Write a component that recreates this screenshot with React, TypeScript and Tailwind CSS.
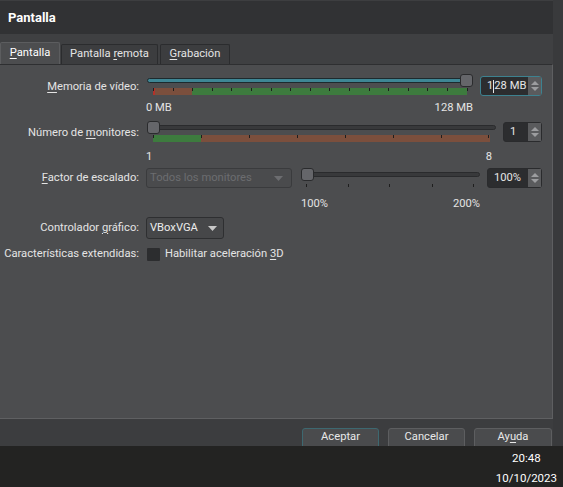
import React from "react"

const font = { fontFamily: "Roboto, 'Liberation Sans', sans-serif" }

function U({ children }: { children: React.ReactNode }) {
  return <span className="underline underline-offset-2">{children}</span>
}

function Arrows() {
  return (
    <div className="flex h-full w-[13px] flex-col items-center justify-center gap-[2px] bg-[#5a5b5d]">
      <svg width="8" height="4" viewBox="0 0 8 4">
        <path d="M0 4 L4 0 L8 4 Z" fill="#9c9d9f" />
      </svg>
      <svg width="8" height="4" viewBox="0 0 8 4">
        <path d="M0 0 L8 0 L4 4 Z" fill="#9c9d9f" />
      </svg>
    </div>
  )
}

function SpinBox({ className, focused, children }: { className: string; focused?: boolean; children: React.ReactNode }) {
  return (
    <div
      className={
        "flex h-[20px] items-stretch rounded-[3px] border bg-[#2c2d2f] " +
        (focused ? "border-[#3d8290] " : "border-[#2a2b2d] ") +
        className
      }
    >
      <div className="flex flex-1 items-center pl-[6px] text-[#e6e6e6]">{children}</div>
      <Arrows />
    </div>
  )
}

function Ticks({ positions }: { positions: number[] }) {
  return (
    <>
      {positions.map((p) => (
        <span key={p} className="absolute top-0 h-[3px] w-[1px] bg-[#1e1e1e]" style={{ left: p }} />
      ))}
    </>
  )
}

function Handle({ left, className }: { left: number; className?: string }) {
  return (
    <div
      className={
        "absolute top-0 h-[13px] w-[13px] rounded-[3px] border border-[#2a2b2d] bg-[#65666a] " + (className ?? "")
      }
      style={{ left }}
    />
  )
}

function Label({ children, h }: { children: React.ReactNode; h: string }) {
  return <div className={"flex w-[139px] shrink-0 items-center justify-end " + h}>{children}</div>
}

export default function App() {
  const memTicks = Array.from({ length: 17 }, (_, i) => Math.round(i * 19.6))
  const monTicks = Array.from({ length: 8 }, (_, i) => i * 48)

  return (
    <div
      className="flex h-[487px] w-[563px] flex-col overflow-hidden whitespace-nowrap bg-[#3b3c3e] text-[11.2px] text-[#e4e4e4]"
      style={font}
    >
      <div className="flex flex-1">
        {/* Main dialog column */}
        <div className="flex w-[553px] flex-col bg-[#3f4042]">
          <div className="flex h-[34px] items-center border-t border-[#3d3e40] bg-[#313234] pl-[8px] text-[13px] font-bold text-white">
            Pantalla
          </div>

          {/* Tabs */}
          <div className="mt-[8px] flex h-[22px] items-end">
            <div className="flex h-[22px] w-[60px] items-center justify-center rounded-t-[2px] border-x border-t border-[#5c5d5f] bg-[#4c4d4f] text-white">
              <span><U>P</U>antalla</span>
            </div>
            <div className="ml-[1px] flex h-[20px] w-[97px] items-center justify-center rounded-t-[2px] border-x border-t border-[#2b2c2e] bg-[#3c3d3f]">
              <span>Pantalla <U>r</U>emota</span>
            </div>
            <div className="ml-[2px] flex h-[20px] w-[70px] items-center justify-center rounded-t-[2px] border-x border-t border-[#2b2c2e] bg-[#3c3d3f]">
              <span><U>G</U>rabación</span>
            </div>
          </div>

          {/* Panel */}
          <div className="flex flex-1 flex-col border-r border-t border-b border-r-[#5e5f61] border-t-[#2e2f31] border-b-[#5f6062] bg-[#4c4d4f] pt-[9px]">
            {/* Row 1: video memory */}
            <div className="flex items-start">
              <Label h="h-[26px]">
                <span><U>M</U>emoria de vídeo:</span>
              </Label>
              <div className="ml-[7px] w-[330px]">
                <div className="relative h-[13px]">
                  <div className="absolute left-[1px] right-[3px] top-[4px] h-[5px] rounded-full border border-[#1d2a2e] bg-[#3e8694]" />
                  <Handle left={314} />
                </div>
                <div className="relative ml-[7px] mt-[1px] flex h-[7px] w-[314px]">
                  <div className="w-[2px] bg-[#b3322a]" />
                  <div className="w-[37px] bg-[#7b4f3d]" />
                  <div className="flex-1 bg-[#3d7b3e]" />
                  <Ticks positions={memTicks} />
                </div>
                <div className="mt-[6px] flex w-[327px] justify-between leading-[14px]">
                  <span>0 MB</span>
                  <span>128 MB</span>
                </div>
              </div>
              <SpinBox className="ml-[4px] mt-[2px] w-[62px]" focused>
                <span>1</span>
                <span className="inline-block h-[13px] w-[1px] bg-[#e6e6e6]" />
                <span>28 MB</span>
              </SpinBox>
            </div>

            {/* Row 2: monitors */}
            <div className="mt-[6px] flex items-start">
              <Label h="h-[24px]">
                <span>Número de <U>m</U>onitores:</span>
              </Label>
              <div className="ml-[7px] w-[350px]">
                <div className="relative h-[13px]">
                  <div className="absolute left-[1px] right-0 top-[4px] h-[5px] rounded-full border border-[#2a2b2d] bg-[#38393b]" />
                  <Handle left={1} />
                </div>
                <div className="relative ml-[7px] mt-[1px] flex h-[7px] w-[337px]">
                  <div className="w-[48px] bg-[#3d7b3e]" />
                  <div className="flex-1 bg-[#7b4f3d]" />
                  <Ticks positions={monTicks.map((t) => (t === 336 ? 335 : t))} />
                </div>
                <div className="mt-[8px] flex justify-between pr-[4px] leading-[14px]">
                  <span>1</span>
                  <span>8</span>
                </div>
              </div>
              <SpinBox className="ml-[7px] mt-[1px] w-[39px]">
                <span>1</span>
              </SpinBox>
            </div>

            {/* Row 3: scaling */}
            <div className="mt-[4px] flex items-start">
              <Label h="h-[20px]">
                <span><U>F</U>actor de escalado:</span>
              </Label>
              <div className="ml-[7px] flex h-[20px] w-[146px] items-center justify-between rounded-[3px] border border-[#3a3b3d] bg-[#4a4b4d] pl-[3px] pr-[8px] text-[#6c6d70]">
                <span>Todos los monitores</span>
                <svg width="9" height="5" viewBox="0 0 9 5">
                  <path d="M0 0 L9 0 L4.5 5 Z" fill="#6c6d70" />
                </svg>
              </div>
              <div className="ml-[9px] w-[179px]">
                <div className="relative h-[13px]">
                  <div className="absolute left-0 right-0 top-[4px] h-[5px] rounded-full border border-[#2a2b2d] bg-[#38393b]" />
                  <Handle left={0} className="w-[12px]" />
                </div>
                <div className="relative mt-[3px] h-[3px]">
                  <Ticks positions={[5, 47, 88, 131, 172]} />
                </div>
                <div className="mt-[10px] flex justify-between leading-[14px]">
                  <span>100%</span>
                  <span>200%</span>
                </div>
              </div>
              <SpinBox className="ml-[7px] w-[55px]">
                <span>100%</span>
              </SpinBox>
            </div>

            {/* Row 4: graphics controller */}
            <div className="mt-[6px] flex items-center">
              <Label h="h-[22px]">
                <span>Controlador <U>g</U>ráfico:</span>
              </Label>
              <div className="ml-[7px] flex h-[22px] w-[78px] items-center justify-between rounded-[3px] border border-[#2e2f31] bg-[#464749] pl-[3px] pr-[6px] text-[#ececec]">
                <span>VBoxVGA</span>
                <svg width="9" height="5" viewBox="0 0 9 5">
                  <path d="M0 0 L9 0 L4.5 5 Z" fill="#c8c8c8" />
                </svg>
              </div>
            </div>

            {/* Row 5: extended features */}
            <div className="mt-[7px] flex items-center">
              <Label h="h-[16px]">
                <span>Características extendidas:</span>
              </Label>
              <div className="ml-[8px] h-[13px] w-[13px] rounded-[1px] bg-[#2c2d2f]" />
              <span className="ml-[5px]">
                Habilitar aceleración <U>3</U>D
              </span>
            </div>
          </div>

          {/* Buttons */}
          <div className="flex h-[27px] items-start justify-end gap-[9px] overflow-hidden bg-[#3c3d3f] pr-[1px] pt-[9px]">
            <button className="h-[23px] w-[77px] rounded-[3px] border border-[#3d6870] bg-[#4a4b4d] pb-[5px] text-[#e8e8e8]">
              Aceptar
            </button>
            <button className="h-[23px] w-[77px] rounded-[3px] border border-[#5d5e60] bg-[#4a4b4d] pb-[5px] text-[#e8e8e8]">
              Cancelar
            </button>
            <button className="h-[23px] w-[78px] rounded-[3px] border border-[#5d5e60] bg-[#4a4b4d] pb-[5px] text-[#e8e8e8]">
              Ay<U>u</U>da
            </button>
          </div>
        </div>
        <div className="flex-1 bg-[#393a3c]" />
      </div>

      {/* Taskbar */}
      <div className="flex h-[41px] shrink-0 justify-end bg-[#232322] pr-[6px]">
        <div className="flex flex-col items-center pt-[2px] text-[11.5px] leading-[20px] text-white">
          <span>20:48</span>
          <span>10/10/2023</span>
        </div>
      </div>
    </div>
  )
}
